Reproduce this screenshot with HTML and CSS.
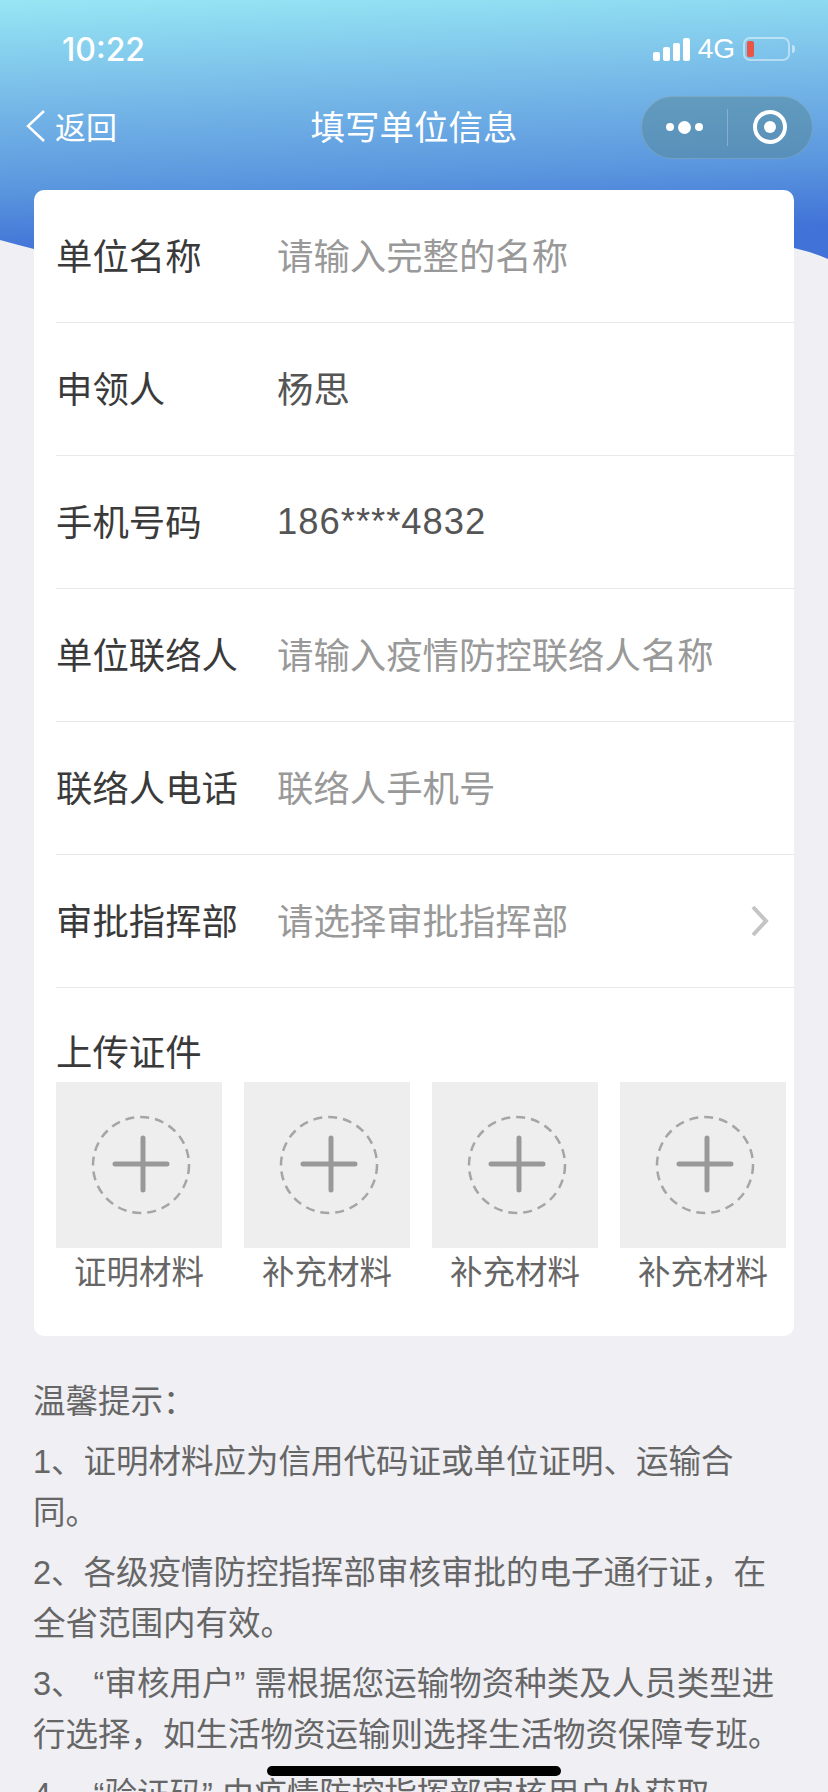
FILE: index.html
```html
<!DOCTYPE html>
<html lang="zh-CN">
<head>
    <meta charset="UTF-8">
    <title>填写单位信息</title>
    <link rel="stylesheet" href="styles.css">
</head>
<body>
<div class="page">
    <div class="top_bg"></div>

    <div class="status_bar">
        <span class="time">10:22</span>
        <div class="status_right">
            <div class="signal">
                <i class="bar1"></i><i class="bar2"></i><i class="bar3"></i><i class="bar4"></i>
            </div>
            <span class="net">4G</span>
            <div class="battery"><i class="battery_fill"></i></div>
            <i class="battery_nub"></i>
        </div>
    </div>

    <div class="nav_bar">
        <div class="back">
            <svg class="back_icon" width="20" height="34" viewBox="0 0 20 34">
                <path d="M19 2 L3 17 L19 32" fill="none" stroke="#fff" stroke-width="2.5"/>
            </svg>
            <span>返回</span>
        </div>
        <div class="nav_title">填写单位信息</div>
        <div class="capsule">
            <div class="capsule_more">
                <i class="dot"></i><i class="dot_big"></i><i class="dot"></i>
            </div>
            <i class="capsule_line"></i>
            <div class="capsule_close"><i class="target"></i></div>
        </div>
    </div>

    <div class="card">
        <div class="row">
            <label class="label">单位名称</label>
            <span class="placeholder">请输入完整的名称</span>
        </div>
        <div class="row">
            <label class="label">申领人</label>
            <span class="value">杨思</span>
        </div>
        <div class="row">
            <label class="label">手机号码</label>
            <span class="value value_num">186****4832</span>
        </div>
        <div class="row">
            <label class="label">单位联络人</label>
            <span class="placeholder">请输入疫情防控联络人名称</span>
        </div>
        <div class="row">
            <label class="label">联络人电话</label>
            <span class="placeholder">联络人手机号</span>
        </div>
        <div class="row">
            <label class="label">审批指挥部</label>
            <span class="placeholder">请选择审批指挥部</span>
            <svg class="arrow" width="20" height="34" viewBox="0 0 20 34">
                <path d="M3 3 L16 17 L3 31" fill="none" stroke="#c4c4c4" stroke-width="4"/>
            </svg>
        </div>
        <div class="upload_title">上传证件</div>
        <div class="upload_list">
            <div class="upload_item">
                <div class="tile">
                    <svg class="plus" width="100" height="100" viewBox="0 0 100 100">
                        <circle cx="50" cy="50" r="48" fill="none" stroke="#a5a5a5" stroke-width="2.5" stroke-dasharray="9 6"/>
                        <path d="M24 49 H76 M52 23 V75" fill="none" stroke="#999" stroke-width="5" stroke-linecap="round"/>
                    </svg>
                </div>
                <div class="caption">证明材料</div>
            </div>
            <div class="upload_item">
                <div class="tile">
                    <svg class="plus" width="100" height="100" viewBox="0 0 100 100">
                        <circle cx="50" cy="50" r="48" fill="none" stroke="#a5a5a5" stroke-width="2.5" stroke-dasharray="9 6"/>
                        <path d="M24 49 H76 M52 23 V75" fill="none" stroke="#999" stroke-width="5" stroke-linecap="round"/>
                    </svg>
                </div>
                <div class="caption">补充材料</div>
            </div>
            <div class="upload_item">
                <div class="tile">
                    <svg class="plus" width="100" height="100" viewBox="0 0 100 100">
                        <circle cx="50" cy="50" r="48" fill="none" stroke="#a5a5a5" stroke-width="2.5" stroke-dasharray="9 6"/>
                        <path d="M24 49 H76 M52 23 V75" fill="none" stroke="#999" stroke-width="5" stroke-linecap="round"/>
                    </svg>
                </div>
                <div class="caption">补充材料</div>
            </div>
            <div class="upload_item">
                <div class="tile">
                    <svg class="plus" width="100" height="100" viewBox="0 0 100 100">
                        <circle cx="50" cy="50" r="48" fill="none" stroke="#a5a5a5" stroke-width="2.5" stroke-dasharray="9 6"/>
                        <path d="M24 49 H76 M52 23 V75" fill="none" stroke="#999" stroke-width="5" stroke-linecap="round"/>
                    </svg>
                </div>
                <div class="caption">补充材料</div>
            </div>
        </div>
    </div>

    <div class="tips">
        <p>温馨提示&#xFF1A;</p>
        <p>1、证明材料应为信用代码证或单位证明、运输合<br>同。</p>
        <p>2、各级疫情防控指挥部审核审批的电子通行证&#xFF0C;在<br>全省范围内有效。</p>
        <p>3、<span class="quote_l">“</span>审核用户<span class="quote_r">”</span>需根据您运输物资种类及人员类型进<br>行选择&#xFF0C;如生活物资运输则选择生活物资保障专班。</p>
        <p>4、<span class="quote_l">“</span>验证码<span class="quote_r">”</span>由疫情防控指挥部审核用户处获取</p>
    </div>

    <div class="home_bar"></div>
</div>
</body>
</html>
```

FILE: styles.css
```css
html, body {
    margin: 0;
    padding: 0;
}
body {
    font-family: "Liberation Sans", "Noto Sans CJK SC", sans-serif;
    background: #efeff4;
}
i {
    display: block;
}
.page {
    position: relative;
    width: 828px;
    height: 1792px;
    overflow: hidden;
}
.top_bg {
    position: absolute;
    left: 0;
    top: 0;
    width: 828px;
    height: 262px;
    background: linear-gradient(178deg, #97e6f4 0, #72b3e6 118px, #5a96de 190px, #4172d7 255px);
    clip-path: path("M0 0 H828 V259 Q812 252 794 248 C600 200 200 300 34 249 Q18 245 0 240 Z");
}

/* status bar */
.status_bar {
    position: relative;
    height: 88px;
    display: flex;
    justify-content: space-between;
    align-items: flex-start;
    padding: 0 33px 0 62px;
    box-sizing: border-box;
    color: #fff;
}
.time {
    font-family: Inter, "Liberation Sans", sans-serif;
    font-size: 32px;
    font-weight: 500;
    line-height: 38px;
    margin-top: 31px;
}
.status_right {
    display: flex;
    align-items: center;
    height: 24px;
    margin-top: 37px;
}
.signal {
    display: flex;
    align-items: flex-end;
    gap: 3px;
    height: 24px;
}
.signal i {
    width: 7px;
    background: #fff;
    border-radius: 2px;
}
.bar1 { height: 9px; }
.bar2 { height: 14px; }
.bar3 { height: 18px; }
.bar4 { height: 23px; }
.net {
    font-size: 28px;
    line-height: 24px;
    margin: 0 8px 0 8px;
}
.battery {
    width: 47px;
    height: 24px;
    box-sizing: border-box;
    border: 2px solid rgba(255, 255, 255, .45);
    border-radius: 7px;
    padding: 2px;
}
.battery_fill {
    width: 7px;
    height: 16px;
    background: #ea5545;
    border-radius: 2px;
}
.battery_nub {
    width: 3px;
    height: 8px;
    margin-left: 2px;
    background: rgba(255, 255, 255, .5);
    border-radius: 0 3px 3px 0;
}

/* nav bar */
.nav_bar {
    position: relative;
    height: 78px;
    display: flex;
    align-items: center;
    justify-content: space-between;
    padding: 0 15px 0 25px;
    color: #fff;
}
.back {
    display: flex;
    align-items: center;
    gap: 10px;
    font-size: 31px;
    width: 162px;
    padding-bottom: 3px;
}
.nav_title {
    font-size: 34.5px;
    padding-bottom: 4px;
}
.capsule {
    width: 172px;
    height: 63px;
    box-sizing: border-box;
    display: flex;
    align-items: center;
    background: rgba(86, 136, 157, .55);
    border: 1px solid rgba(255, 255, 255, .15);
    border-radius: 32px;
}
.capsule_more {
    flex: 1;
    display: flex;
    justify-content: center;
    align-items: center;
    gap: 4px;
}
.dot {
    width: 8px;
    height: 8px;
    border-radius: 50%;
    background: #fff;
}
.dot_big {
    width: 13px;
    height: 13px;
    border-radius: 50%;
    background: #fff;
}
.capsule_line {
    width: 1px;
    height: 37px;
    background: rgba(255, 255, 255, .25);
}
.capsule_close {
    flex: 1;
    display: flex;
    justify-content: center;
    align-items: center;
}
.target {
    width: 34px;
    height: 34px;
    box-sizing: border-box;
    border: 4px solid #fff;
    border-radius: 50%;
    position: relative;
}
.target:after {
    content: "";
    position: absolute;
    left: 7px;
    top: 7px;
    width: 12px;
    height: 12px;
    border-radius: 50%;
    background: #fff;
}

/* form card */
.card {
    position: relative;
    width: 760px;
    height: 1146px;
    margin: 24px 0 0 34px;
    padding-left: 22px;
    box-sizing: border-box;
    background: #fff;
    border-radius: 10px;
}
.row {
    height: 133px;
    box-sizing: border-box;
    display: flex;
    align-items: center;
    border-bottom: 1px solid #e8e8e8;
    font-size: 36.4px;
    padding-bottom: 5px;
}
.label {
    width: 221px;
    color: #3a3a3a;
}
.value {
    color: #555;
}
.value_num {
    letter-spacing: 1px;
    padding-top: 5px;
}
.placeholder {
    color: #999;
}
.arrow {
    margin-left: auto;
    margin-right: 24px;
    margin-top: 5px;
}
.upload_title {
    font-size: 36.4px;
    line-height: 50px;
    color: #3a3a3a;
    padding: 41px 0 3px;
}
.upload_list {
    display: flex;
    gap: 22px;
}
.upload_item {
    width: 166px;
}
.tile {
    width: 166px;
    height: 166px;
    background: #eee;
    display: flex;
    justify-content: center;
    align-items: center;
}
.plus {
    margin-left: 4px;
}
.caption {
    font-size: 32.5px;
    line-height: 50px;
    text-align: center;
    color: #666;
}

/* tips */
.tips {
    padding: 41px 10px 0 33px;
    font-size: 32.5px;
    line-height: 51px;
    color: #666;
}
.tips p {
    margin: 0 0 9px;
}
.quote_l {
    padding-left: 10px;
}
.quote_r {
    padding-right: 9px;
}
.home_bar {
    position: absolute;
    left: 267px;
    top: 1766px;
    width: 294px;
    height: 10px;
    background: #000;
    border-radius: 5px;
}
```
